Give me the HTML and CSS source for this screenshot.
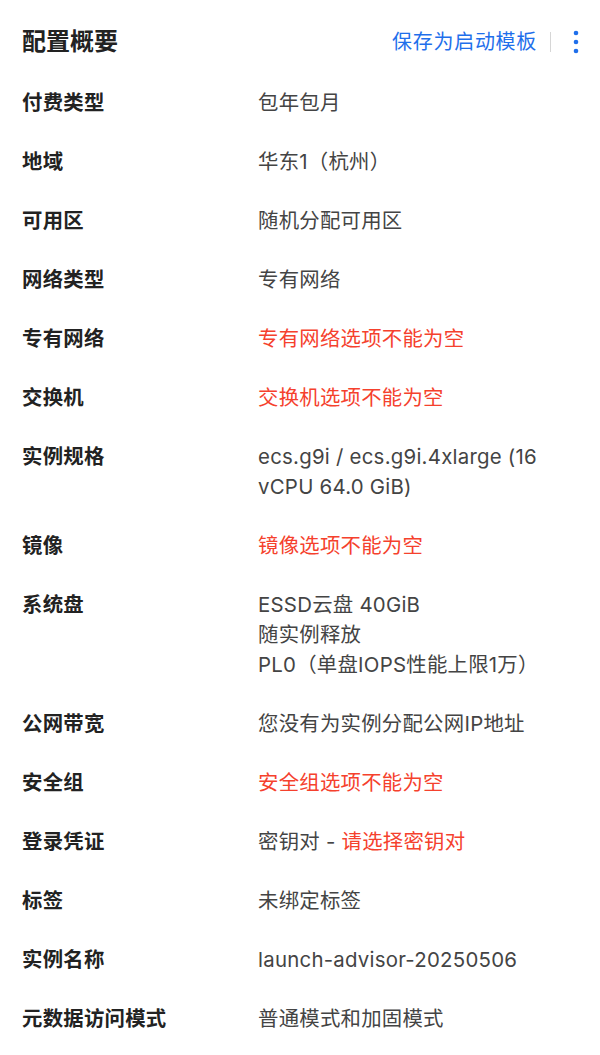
FILE: index.html
```html
<!DOCTYPE html>
<html lang="zh-CN">
<head>
<meta charset="utf-8">
<title>配置概要</title>
<link rel="stylesheet" href="styles.css">
</head>
<body>
<div class="panel">
  <div class="header">
    <h1 class="title">配置概要</h1>
    <div class="actions">
      <a class="link">保存为启动模板</a>
      <span class="divider"></span>
      <span class="more" aria-label="更多">
        <svg width="6" height="24" viewBox="0 0 6 24"><circle cx="3" cy="3" r="2.3" fill="#1f6feb"/><circle cx="3" cy="12" r="2.3" fill="#1f6feb"/><circle cx="3" cy="21" r="2.3" fill="#1f6feb"/></svg>
      </span>
    </div>
  </div>
  <dl class="list">
    <div class="row"><dt>付费类型</dt><dd>包年包月</dd></div>
    <div class="row"><dt>地域</dt><dd>华东1（杭州）</dd></div>
    <div class="row"><dt>可用区</dt><dd>随机分配可用区</dd></div>
    <div class="row"><dt>网络类型</dt><dd>专有网络</dd></div>
    <div class="row"><dt>专有网络</dt><dd class="err">专有网络选项不能为空</dd></div>
    <div class="row"><dt>交换机</dt><dd class="err">交换机选项不能为空</dd></div>
    <div class="row"><dt>实例规格</dt><dd>ecs.g9i / ecs.g9i.4xlarge (16 vCPU 64.0 GiB)</dd></div>
    <div class="row"><dt>镜像</dt><dd class="err">镜像选项不能为空</dd></div>
    <div class="row"><dt>系统盘</dt><dd><div>ESSD云盘 40GiB</div><div>随实例释放</div><div>PL0（单盘IOPS性能上限1万）</div></dd></div>
    <div class="row"><dt>公网带宽</dt><dd>您没有为实例分配公网IP地址</dd></div>
    <div class="row"><dt>安全组</dt><dd class="err">安全组选项不能为空</dd></div>
    <div class="row"><dt>登录凭证</dt><dd>密钥对 - <span class="err">请选择密钥对</span></dd></div>
    <div class="row"><dt>标签</dt><dd>未绑定标签</dd></div>
    <div class="row"><dt>实例名称</dt><dd>launch-advisor-20250506</dd></div>
    <div class="row"><dt>元数据访问模式</dt><dd>普通模式和加固模式</dd></div>
  </dl>
</div>
</body>
</html>
```

FILE: styles.css
```css
* { box-sizing: border-box; }
html, body {
  margin: 0;
  padding: 0;
  background: #ffffff;
}
body {
  font-family: "Inter", "Noto Sans CJK SC", "Noto Sans", sans-serif;
  color: #333333;
}
.panel {
  padding: 27px 22px 0 22px;
}
.header {
  display: flex;
  align-items: center;
  justify-content: space-between;
  height: 30px;
}
.title {
  margin: 0;
  font-size: 24px;
  line-height: 30px;
  font-weight: 700;
  color: #222222;
}
.actions {
  display: flex;
  align-items: center;
}
.link {
  color: #1f6feb;
  font-size: 20px;
  letter-spacing: 0.7px;
  line-height: 30px;
  text-decoration: none;
}
.divider {
  width: 1px;
  height: 20px;
  background: #d6d6d6;
  margin: 0 22px 0 13px;
}
.more {
  display: flex;
  align-items: center;
  margin-right: -1px;
}
.list {
  margin: 31px 0 0 0;
  padding: 0;
  display: flex;
  flex-direction: column;
  gap: 29px;
}
.row {
  display: grid;
  grid-template-columns: 236px 1fr;
  font-size: 20.4px;
  letter-spacing: 0.25px;
  line-height: 30px;
}
.row dt {
  font-weight: 600;
  color: #222222;
}
.row dd {
  margin: 0;
  color: #444444;
  padding-right: 20px;
}
.row .err {
  color: #f5412d;
}
```
